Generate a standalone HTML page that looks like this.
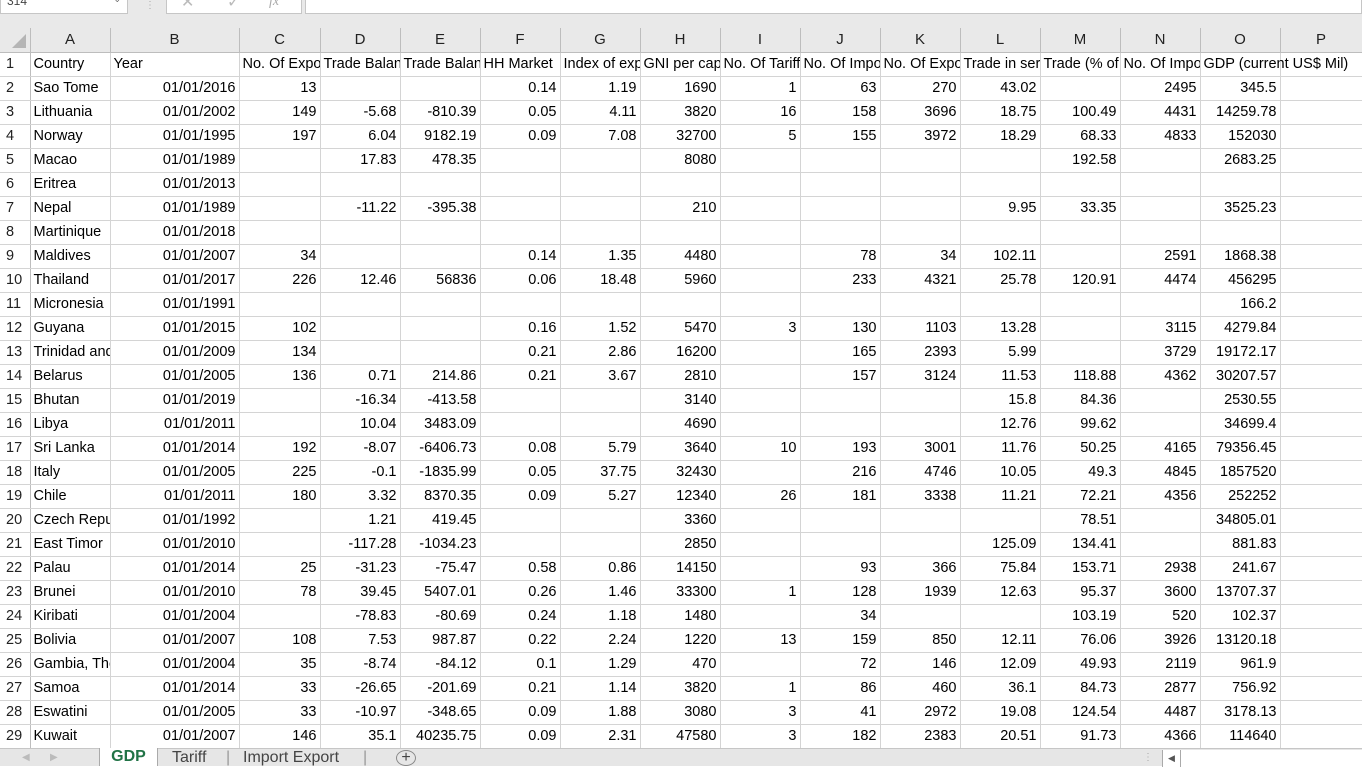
<!DOCTYPE html>
<html><head><meta charset="utf-8"><style>
*{margin:0;padding:0;box-sizing:border-box}
body{width:1362px;height:766px;overflow:hidden;background:#fff;font-family:"Liberation Sans",sans-serif;font-size:14.5px;color:#000;position:relative}
#top{position:absolute;left:0;top:0;width:1362px;height:28px;background:#e9e9e9}
.box{position:absolute;top:0;height:14px;background:#fff;border:1px solid #c6c6c6;border-top:none}
table{position:absolute;left:0;top:28px;border-collapse:collapse;table-layout:fixed;width:1362px}
td{height:24px;border-right:1px solid #d4d4d4;border-bottom:1px solid #d4d4d4;white-space:nowrap;overflow:hidden;padding:0 3px;text-align:right;line-height:22px}
td.t{text-align:left}
tr.h td{background:#e9e9e9;text-align:center;border-right:1px solid #bdbdbd;border-bottom:1px solid #bdbdbd;color:#222;font-size:15px}
td.r{background:#fff;text-align:left;padding-left:6px;border-right:1px solid #bdbdbd;border-bottom:1px solid #d4d4d4;color:#222}
#tabs{position:absolute;left:0;top:748px;width:1362px;height:18px;background:#e6e6e6;border-top:1px solid #c6c6c6}
.tab{position:absolute;top:0;height:18px;line-height:17px;font-size:16px;color:#444}
</style></head><body>
<div id="top">
<div class="box" style="left:0;width:128px"><span style="font-size:12px;color:#444;position:absolute;left:6px;top:-6px">314</span><span style="position:absolute;right:6px;top:-6px;font-size:9px;color:#666">⌄</span></div>
<div style="position:absolute;left:145px;top:0;color:#aaa;font-size:10px">⋮</div>
<div class="box" style="left:166px;width:136px"><span style="position:absolute;left:14px;top:-8px;color:#bbb;font-size:16px">✕</span><span style="position:absolute;left:60px;top:-8px;color:#bbb;font-size:16px">✓</span><span style="position:absolute;left:102px;top:-6px;color:#aaa;font-style:italic;font-family:'Liberation Serif',serif;font-size:14px">fx</span></div>
<div class="box" style="left:305px;width:1057px"></div>
</div>
<div style="position:absolute;left:12px;top:34px;width:0;height:0;border-left:14px solid transparent;border-bottom:14px solid #b5b5b5;z-index:3"></div>
<table>
<colgroup><col style="width:30px"><col style="width:80px"><col style="width:129px"><col style="width:81px"><col style="width:80px"><col style="width:80px"><col style="width:80px"><col style="width:80px"><col style="width:80px"><col style="width:80px"><col style="width:80px"><col style="width:80px"><col style="width:80px"><col style="width:80px"><col style="width:80px"><col style="width:80px"><col style="width:82px"></colgroup>
<tr class="h"><td></td><td>A</td><td>B</td><td>C</td><td>D</td><td>E</td><td>F</td><td>G</td><td>H</td><td>I</td><td>J</td><td>K</td><td>L</td><td>M</td><td>N</td><td>O</td><td>P</td></tr>
<tr><td class="r">1</td><td class="t">Country</td><td class="t">Year</td><td class="t">No. Of Exporters</td><td class="t">Trade Balance</td><td class="t">Trade Balance</td><td class="t">HH Market</td><td class="t">Index of export</td><td class="t">GNI per capita</td><td class="t">No. Of Tariff</td><td class="t">No. Of Importers</td><td class="t">No. Of Exporters</td><td class="t">Trade in services</td><td class="t">Trade (% of GDP)</td><td class="t">No. Of Importers</td><td class="t" style="overflow:visible;position:relative;z-index:2">GDP (current US$ Mil)</td><td></td></tr>
<tr><td class="r">2</td><td class="t">Sao Tome</td><td>01/01/2016</td><td>13</td><td></td><td></td><td>0.14</td><td>1.19</td><td>1690</td><td>1</td><td>63</td><td>270</td><td>43.02</td><td></td><td>2495</td><td>345.5</td><td></td></tr>
<tr><td class="r">3</td><td class="t">Lithuania</td><td>01/01/2002</td><td>149</td><td>-5.68</td><td>-810.39</td><td>0.05</td><td>4.11</td><td>3820</td><td>16</td><td>158</td><td>3696</td><td>18.75</td><td>100.49</td><td>4431</td><td>14259.78</td><td></td></tr>
<tr><td class="r">4</td><td class="t">Norway</td><td>01/01/1995</td><td>197</td><td>6.04</td><td>9182.19</td><td>0.09</td><td>7.08</td><td>32700</td><td>5</td><td>155</td><td>3972</td><td>18.29</td><td>68.33</td><td>4833</td><td>152030</td><td></td></tr>
<tr><td class="r">5</td><td class="t">Macao</td><td>01/01/1989</td><td></td><td>17.83</td><td>478.35</td><td></td><td></td><td>8080</td><td></td><td></td><td></td><td></td><td>192.58</td><td></td><td>2683.25</td><td></td></tr>
<tr><td class="r">6</td><td class="t">Eritrea</td><td>01/01/2013</td><td></td><td></td><td></td><td></td><td></td><td></td><td></td><td></td><td></td><td></td><td></td><td></td><td></td><td></td></tr>
<tr><td class="r">7</td><td class="t">Nepal</td><td>01/01/1989</td><td></td><td>-11.22</td><td>-395.38</td><td></td><td></td><td>210</td><td></td><td></td><td></td><td>9.95</td><td>33.35</td><td></td><td>3525.23</td><td></td></tr>
<tr><td class="r">8</td><td class="t">Martinique</td><td>01/01/2018</td><td></td><td></td><td></td><td></td><td></td><td></td><td></td><td></td><td></td><td></td><td></td><td></td><td></td><td></td></tr>
<tr><td class="r">9</td><td class="t">Maldives</td><td>01/01/2007</td><td>34</td><td></td><td></td><td>0.14</td><td>1.35</td><td>4480</td><td></td><td>78</td><td>34</td><td>102.11</td><td></td><td>2591</td><td>1868.38</td><td></td></tr>
<tr><td class="r">10</td><td class="t">Thailand</td><td>01/01/2017</td><td>226</td><td>12.46</td><td>56836</td><td>0.06</td><td>18.48</td><td>5960</td><td></td><td>233</td><td>4321</td><td>25.78</td><td>120.91</td><td>4474</td><td>456295</td><td></td></tr>
<tr><td class="r">11</td><td class="t">Micronesia</td><td>01/01/1991</td><td></td><td></td><td></td><td></td><td></td><td></td><td></td><td></td><td></td><td></td><td></td><td></td><td>166.2</td><td></td></tr>
<tr><td class="r">12</td><td class="t">Guyana</td><td>01/01/2015</td><td>102</td><td></td><td></td><td>0.16</td><td>1.52</td><td>5470</td><td>3</td><td>130</td><td>1103</td><td>13.28</td><td></td><td>3115</td><td>4279.84</td><td></td></tr>
<tr><td class="r">13</td><td class="t">Trinidad and</td><td>01/01/2009</td><td>134</td><td></td><td></td><td>0.21</td><td>2.86</td><td>16200</td><td></td><td>165</td><td>2393</td><td>5.99</td><td></td><td>3729</td><td>19172.17</td><td></td></tr>
<tr><td class="r">14</td><td class="t">Belarus</td><td>01/01/2005</td><td>136</td><td>0.71</td><td>214.86</td><td>0.21</td><td>3.67</td><td>2810</td><td></td><td>157</td><td>3124</td><td>11.53</td><td>118.88</td><td>4362</td><td>30207.57</td><td></td></tr>
<tr><td class="r">15</td><td class="t">Bhutan</td><td>01/01/2019</td><td></td><td>-16.34</td><td>-413.58</td><td></td><td></td><td>3140</td><td></td><td></td><td></td><td>15.8</td><td>84.36</td><td></td><td>2530.55</td><td></td></tr>
<tr><td class="r">16</td><td class="t">Libya</td><td>01/01/2011</td><td></td><td>10.04</td><td>3483.09</td><td></td><td></td><td>4690</td><td></td><td></td><td></td><td>12.76</td><td>99.62</td><td></td><td>34699.4</td><td></td></tr>
<tr><td class="r">17</td><td class="t">Sri Lanka</td><td>01/01/2014</td><td>192</td><td>-8.07</td><td>-6406.73</td><td>0.08</td><td>5.79</td><td>3640</td><td>10</td><td>193</td><td>3001</td><td>11.76</td><td>50.25</td><td>4165</td><td>79356.45</td><td></td></tr>
<tr><td class="r">18</td><td class="t">Italy</td><td>01/01/2005</td><td>225</td><td>-0.1</td><td>-1835.99</td><td>0.05</td><td>37.75</td><td>32430</td><td></td><td>216</td><td>4746</td><td>10.05</td><td>49.3</td><td>4845</td><td>1857520</td><td></td></tr>
<tr><td class="r">19</td><td class="t">Chile</td><td>01/01/2011</td><td>180</td><td>3.32</td><td>8370.35</td><td>0.09</td><td>5.27</td><td>12340</td><td>26</td><td>181</td><td>3338</td><td>11.21</td><td>72.21</td><td>4356</td><td>252252</td><td></td></tr>
<tr><td class="r">20</td><td class="t">Czech Republic</td><td>01/01/1992</td><td></td><td>1.21</td><td>419.45</td><td></td><td></td><td>3360</td><td></td><td></td><td></td><td></td><td>78.51</td><td></td><td>34805.01</td><td></td></tr>
<tr><td class="r">21</td><td class="t">East Timor</td><td>01/01/2010</td><td></td><td>-117.28</td><td>-1034.23</td><td></td><td></td><td>2850</td><td></td><td></td><td></td><td>125.09</td><td>134.41</td><td></td><td>881.83</td><td></td></tr>
<tr><td class="r">22</td><td class="t">Palau</td><td>01/01/2014</td><td>25</td><td>-31.23</td><td>-75.47</td><td>0.58</td><td>0.86</td><td>14150</td><td></td><td>93</td><td>366</td><td>75.84</td><td>153.71</td><td>2938</td><td>241.67</td><td></td></tr>
<tr><td class="r">23</td><td class="t">Brunei</td><td>01/01/2010</td><td>78</td><td>39.45</td><td>5407.01</td><td>0.26</td><td>1.46</td><td>33300</td><td>1</td><td>128</td><td>1939</td><td>12.63</td><td>95.37</td><td>3600</td><td>13707.37</td><td></td></tr>
<tr><td class="r">24</td><td class="t">Kiribati</td><td>01/01/2004</td><td></td><td>-78.83</td><td>-80.69</td><td>0.24</td><td>1.18</td><td>1480</td><td></td><td>34</td><td></td><td></td><td>103.19</td><td>520</td><td>102.37</td><td></td></tr>
<tr><td class="r">25</td><td class="t">Bolivia</td><td>01/01/2007</td><td>108</td><td>7.53</td><td>987.87</td><td>0.22</td><td>2.24</td><td>1220</td><td>13</td><td>159</td><td>850</td><td>12.11</td><td>76.06</td><td>3926</td><td>13120.18</td><td></td></tr>
<tr><td class="r">26</td><td class="t">Gambia, The</td><td>01/01/2004</td><td>35</td><td>-8.74</td><td>-84.12</td><td>0.1</td><td>1.29</td><td>470</td><td></td><td>72</td><td>146</td><td>12.09</td><td>49.93</td><td>2119</td><td>961.9</td><td></td></tr>
<tr><td class="r">27</td><td class="t">Samoa</td><td>01/01/2014</td><td>33</td><td>-26.65</td><td>-201.69</td><td>0.21</td><td>1.14</td><td>3820</td><td>1</td><td>86</td><td>460</td><td>36.1</td><td>84.73</td><td>2877</td><td>756.92</td><td></td></tr>
<tr><td class="r">28</td><td class="t">Eswatini</td><td>01/01/2005</td><td>33</td><td>-10.97</td><td>-348.65</td><td>0.09</td><td>1.88</td><td>3080</td><td>3</td><td>41</td><td>2972</td><td>19.08</td><td>124.54</td><td>4487</td><td>3178.13</td><td></td></tr>
<tr><td class="r">29</td><td class="t">Kuwait</td><td>01/01/2007</td><td>146</td><td>35.1</td><td>40235.75</td><td>0.09</td><td>2.31</td><td>47580</td><td>3</td><td>182</td><td>2383</td><td>20.51</td><td>91.73</td><td>4366</td><td>114640</td><td></td></tr>
</table>
<div id="tabs">
<span class="tab" style="left:22px;color:#bbb;font-size:10px">◀</span><span class="tab" style="left:50px;color:#bbb;font-size:10px">▶</span>
<div class="tab" style="left:99px;width:59px;background:#fff;border-left:1px solid #aaa;border-right:1px solid #aaa;text-align:center;color:#217346;font-weight:bold;top:-1px">GDP</div>
<span class="tab" style="left:172px">Tariff</span>
<span class="tab" style="left:226px;color:#999">|</span>
<span class="tab" style="left:243px">Import Export</span>
<span class="tab" style="left:363px;color:#999">|</span>
<span class="tab" style="left:396px;width:20px;height:16px;border:1px solid #888;border-radius:50%;text-align:center;line-height:13px;font-size:16px;top:1px">+</span>
<span class="tab" style="left:1143px;color:#aaa;font-size:10px">⋮</span>
<div class="tab" style="left:1162px;width:200px;background:#fff;border-left:1px solid #aaa;top:1px;height:17px"><span style="position:absolute;left:0;top:0;width:18px;height:17px;border-right:1px solid #aaa;font-size:9px;color:#555;text-align:center">◀</span></div>
</div>
</body></html>
